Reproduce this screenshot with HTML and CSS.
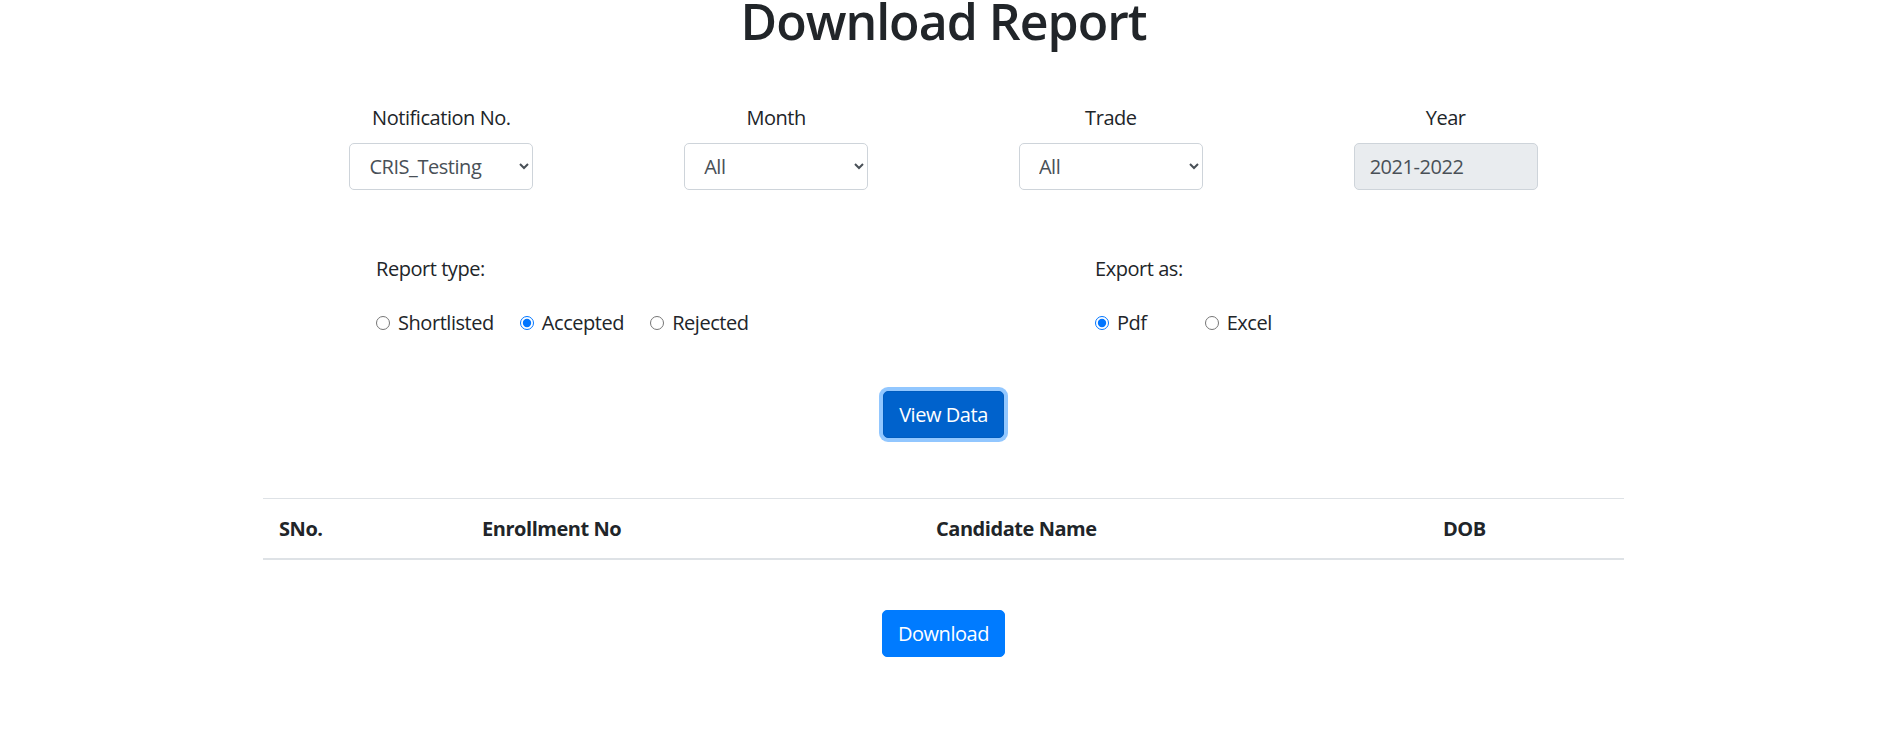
FILE: index.html
```html
<!DOCTYPE html>
<html lang="en">
<head>
<meta charset="utf-8">
<title>Download Report</title>
<link rel="stylesheet" href="styles.css">
</head>
<body>
<main class="page">
  <h1 class="title">Download Report</h1>

  <section class="filters">
    <div class="field">
      <label class="field-label" for="notif">Notification No.</label>
      <select id="notif" class="control"><option>CRIS_Testing</option></select>
    </div>
    <div class="field">
      <label class="field-label" for="month">Month</label>
      <select id="month" class="control"><option>All</option></select>
    </div>
    <div class="field">
      <label class="field-label" for="trade">Trade</label>
      <select id="trade" class="control"><option>All</option></select>
    </div>
    <div class="field">
      <label class="field-label" for="year">Year</label>
      <input id="year" class="control control-readonly" type="text" value="2021-2022" readonly>
    </div>
  </section>

  <section class="options">
    <div class="group">
      <div class="group-label">Report type:</div>
      <div class="radios">
        <label class="radio"><input type="radio" name="rtype"><span>Shortlisted</span></label>
        <label class="radio"><input type="radio" name="rtype" checked><span>Accepted</span></label>
        <label class="radio"><input type="radio" name="rtype"><span>Rejected</span></label>
      </div>
    </div>
    <div class="group">
      <div class="group-label">Export as:</div>
      <div class="radios radios-wide">
        <label class="radio"><input type="radio" name="etype" checked><span>Pdf</span></label>
        <label class="radio"><input type="radio" name="etype"><span>Excel</span></label>
      </div>
    </div>
  </section>

  <div class="actions">
    <button class="btn btn-focus" type="button">View Data</button>
  </div>

  <table class="data-table">
    <thead>
      <tr>
        <th class="c-sno">SNo.</th>
        <th class="c-enr">Enrollment No</th>
        <th class="c-name">Candidate Name</th>
        <th class="c-dob">DOB</th>
      </tr>
    </thead>
  </table>

  <div class="actions actions-bottom">
    <button class="btn" type="button">Download</button>
  </div>
</main>
</body>
</html>
```

FILE: styles.css
```css
* { box-sizing: border-box; }

html, body {
  margin: 0;
  padding: 0;
  background: #fff;
}

body {
  font-family: "Open Sans", "Noto Sans", "Liberation Sans", sans-serif;
  font-size: 20px;
  line-height: 30px;
  letter-spacing: -0.45px;
  color: #212529;
}

.page {
  width: 1887px;
  display: flex;
  flex-direction: column;
  align-items: center;
}

.title {
  margin: 0;
  font-size: 50px;
  line-height: 42px;
  font-weight: 600;
  letter-spacing: -1px;
  text-align: center;
}

.filters {
  margin-top: 61px;
  width: 1339px;
  display: grid;
  grid-template-columns: repeat(4, 1fr);
}

.field {
  display: flex;
  flex-direction: column;
  align-items: center;
}

.field-label {
  display: block;
  margin-bottom: 10px;
  line-height: 30px;
}

.control {
  width: 184px;
  height: 47px;
  padding: 0 15px;
  font-family: inherit;
  font-size: 20px;
  letter-spacing: -0.45px;
  color: #495057;
  background-color: #fff;
  border: 1px solid #ced4da;
  border-radius: 5px;
}

.control-readonly {
  background-color: #e9ecef;
  opacity: 1;
}

.options {
  margin-top: 64px;
  width: 1339px;
  padding-left: 102px;
  display: grid;
  grid-template-columns: 719px 1fr;
}

.group-label {
  line-height: 30px;
}

.radios {
  margin-top: 24px;
  display: flex;
  align-items: center;
  gap: 26px;
}

.radios-wide {
  gap: 58px;
}

.radio {
  display: flex;
  align-items: center;
  gap: 8px;
  line-height: 30px;
}

.radio input {
  width: 14px;
  height: 14px;
  margin: 0;
}

.actions {
  margin-top: 53px;
  display: flex;
  justify-content: center;
}

.btn {
  height: 47px;
  padding: 0 15px;
  white-space: nowrap;
  font-family: inherit;
  font-size: 20px;
  line-height: 30px;
  letter-spacing: -0.45px;
  color: #fff;
  background-color: #007bff;
  border: 1px solid #007bff;
  border-radius: 5px;
}

.btn-focus {
  background-color: #0062cc;
  border-color: #005cbf;
  box-shadow: 0 0 0 4px rgba(38, 143, 255, 0.5);
}

.data-table {
  margin-top: 60px;
  width: 1361px;
  border-collapse: collapse;
}

.data-table th {
  text-align: left;
  font-weight: 700;
  padding: 15px 16px 14px;
  line-height: 30px;
  border-top: 1px solid #dee2e6;
  border-bottom: 2px solid #dee2e6;
}

.c-sno { width: 203px; }
.c-enr { width: 454px; }
.c-name { width: 507px; }
.c-dob { width: 197px; }

.actions-bottom {
  margin-top: 50px;
}
```
